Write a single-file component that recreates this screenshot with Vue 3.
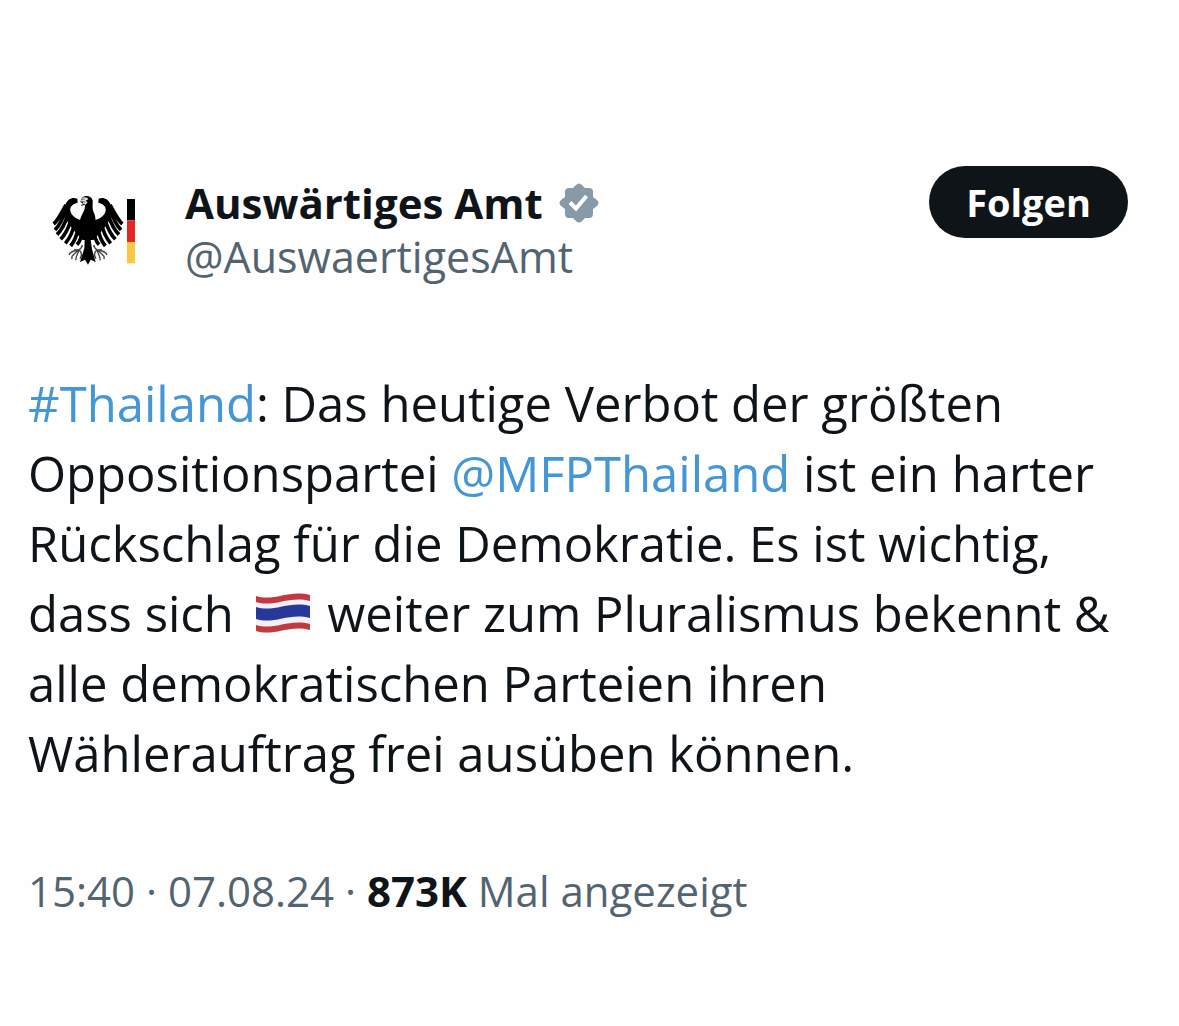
<template>
  <article class="post">
    <header class="post-header">
      <svg class="avatar" viewBox="36 45 252 210" role="img" aria-label="Bundesadler">
        <g v-for="side in wings" :key="side" :transform="side">
          <path d="M112 56 C98 50 83 57 77 72 L64 92 L76 116 L100 150 L128 180 L144 180 V118 C120 126 99 113 92 96 C88 84 93 73 113 68 Z" />
          <path class="feather" d="M78 75 C65 97 55 120 41 132 M76 91 C68 118 58 137 45 150 M82 108 C74 134 64 151 51 164 M92 122 C84 148 74 165 62 178 M103 132 C98 157 88 176 76 190 M115 140 C111 168 103 184 92 198 M127 148 C125 170 119 186 111 194" />
          <path class="claw" d="M127 195 C123 212 111 211 103 208 M116 210 C102 212 90 214 87 225 M116 211 C101 224 91 229 97 237 M117 211 C113 224 105 232 108 241 M118 210 C127 219 124 230 120 236" />
        </g>
        <path d="M126 54 C134 44 154 47 158 61 C159 74 155 84 162 99 C172 121 164 155 152 179 L156 208 L167 246 L152 239 L144 254 L135 239 L120 246 L133 205 L134 180 C119 155 114 124 126 104 C133 92 137 82 134 74 L123 78 L128 69 L121 66 Z" />
        <path class="face" d="M125 56 C132 49 144 52 145 58 L137 62 L143 67 L136 75 L132 71 L125 75 L130 67 L123 64 Z" />
        <path class="beak" d="M123 58 L134 57 M125 65 L136 66" />
        <rect x="261" y="57" width="24" height="64" />
        <rect x="261" y="121" width="24" height="65" fill="#e32720" />
        <rect x="261" y="186" width="24" height="64" fill="#f8c845" />
      </svg>

      <div class="author">
        <h1 class="name">
          Auswärtiges Amt
          <svg class="badge" viewBox="0 0 40 40" role="img" aria-label="Verifiziert">
            <path d="M17 2 Q20 -1 23 2 L26 5 L30 5 Q34 5 34 9 L34 14 L38 17 Q41 20 38 23 L34 26 L34 31 Q34 35 30 35 L26 35 L23 38 Q20 41 17 38 L14 35 L10 35 Q6 35 6 31 L6 26 L2 23 Q-1 20 2 17 L6 14 L6 9 Q6 5 10 5 L14 5 Z" />
            <path class="check" d="M11 19.5 L17 25.5 L27.5 13" />
          </svg>
        </h1>
        <a class="handle" href="#">@AuswaertigesAmt</a>
      </div>

      <button class="follow" type="button">Folgen</button>
    </header>

    <p class="text">
      <a href="#">#Thailand</a>: Das heutige Verbot der größten Oppositionspartei
      <a href="#">@MFPThailand</a> ist ein harter Rückschlag für die Demokratie. Es ist wichtig,
      dass sich
      <svg class="flag" viewBox="0 0 56 42" role="img" aria-label="Thailand">
        <path fill="#f1f1f7" d="M1 4 C19 12 34 -3 55 3 V38 C35 32 20 46 1 39 Z" />
        <path fill="#c03a40" d="M1 4 C19 10 34 -3 55 3 V9 C34 3 19 16 1 10 Z M1 33 C19 39 34 26 55 32 V38 C34 32 19 45 1 39 Z" />
        <path fill="#27389a" d="M1 15 C19 21 34 8 55 14 V26 C34 20 19 33 1 27 Z" />
      </svg>
      weiter zum Pluralismus bekennt &amp; alle demokratischen Parteien ihren Wählerauftrag frei
      ausüben können.
    </p>

    <footer class="meta">
      <time datetime="2024-08-07T15:40">15:40 · 07.08.24</time> · <strong>873K</strong> Mal angezeigt
    </footer>
  </article>
</template>

<script setup>
// the right wing is the left one mirrored on the body axis
const wings = ['', 'translate(288 0) scale(-1 1)']
</script>

<style>
body {
  margin: 0;
  background: #fefefe;
}
</style>

<style scoped>
.post {
  padding: 166px 28px 108px;
  color: #0f1419;
  font-family: "Open Sans", "Noto Sans", sans-serif;
}

.post-header {
  display: flex;
  align-items: flex-start;
  padding: 0 23px 0 24px;
}

.avatar {
  width: 84px;
  height: 70px;
  margin-top: 29px;
  flex: none;
}

.feather {
  fill: none;
  stroke: #000;
  stroke-width: 11;
}

.claw {
  fill: none;
  stroke: #444;
  stroke-width: 4;
}

.face {
  fill: #ddd;
}

.beak {
  fill: none;
  stroke: #333;
  stroke-width: 2;
}

.author {
  flex: 1;
  margin: 10px 0 0 49px;
}

.name {
  display: flex;
  align-items: center;
  gap: 16px;
  margin: 0;
  font-size: 42px;
  font-weight: 700;
  line-height: 54px;
}

.badge {
  width: 40px;
  height: 40px;
  fill: #8899a8;
}

.check {
  fill: none;
  stroke: #fff;
  stroke-width: 4;
}

.handle {
  display: block;
  color: #536471;
  font-size: 43px;
  line-height: 54px;
  text-decoration: none;
}

.follow {
  height: 72px;
  padding: 0 37px;
  border: none;
  border-radius: 36px;
  background: #0f1419;
  color: #fff;
  font-family: inherit;
  font-size: 38px;
  font-weight: 700;
  cursor: pointer;
}

.text {
  margin: 84px 0 0;
  padding-right: 40px;
  font-size: 49px;
  line-height: 70px;
}

.text a {
  color: #4596d5;
  text-decoration: none;
}

.flag {
  width: 56px;
  height: 42px;
  margin: 0 4px 0 8px;
  vertical-align: -2px;
}

.meta {
  margin-top: 75px;
  color: #536471;
  font-size: 42px;
  line-height: 56px;
}

.meta strong {
  color: #0f1419;
}
</style>
